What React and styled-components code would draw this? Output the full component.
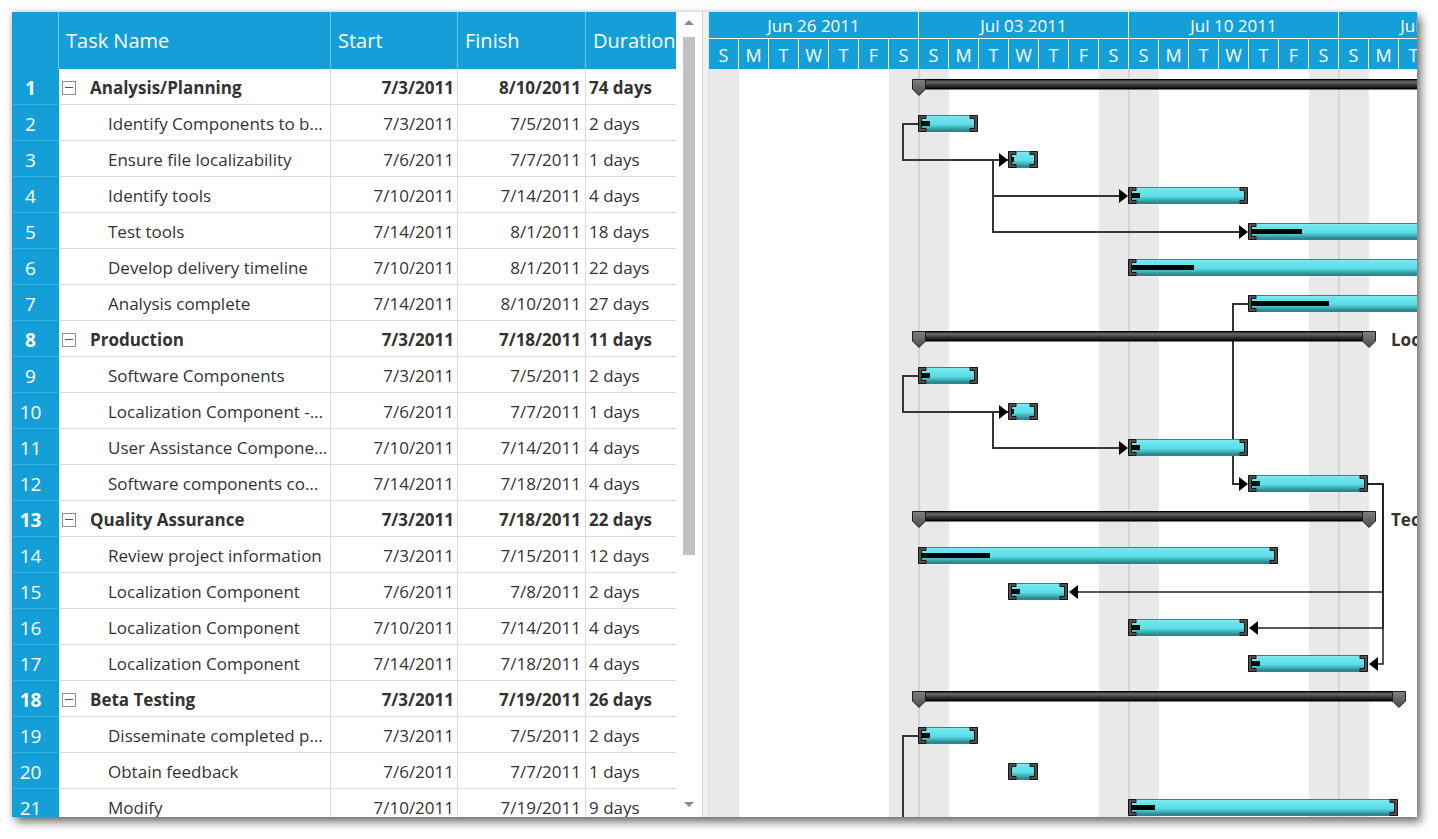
import React from "react";
import styled, { createGlobalStyle } from "styled-components";

const BLUE = "#149fd9";
const FONT = `"Open Sans", "Noto Sans", "DejaVu Sans", sans-serif`;

const GlobalStyle = createGlobalStyle`
  html, body { margin: 0; padding: 0; background: #fff; }
  body { font-family: ${FONT}; }
`;

const Page = styled.div`
  height: 839px;
  padding: 12px 0 0 12px;
  box-sizing: border-box;
  overflow: hidden;
`;

const Window = styled.div`
  width: 1405px;
  height: 805px;
  display: flex;
  background: #fff;
  overflow: hidden;
  box-shadow: 4px 5px 9px rgba(0, 0, 0, 0.55), 0 0 5px rgba(0, 0, 0, 0.18);
`;

const GridPanel = styled.div`
  width: 664px;
  flex-shrink: 0;
  display: flex;
  flex-direction: column;
`;

const GridRow = styled.div`
  display: grid;
  grid-template-columns: 47px 272px 127px 128px 90px;
  height: ${(p) => p.$h}px;
  flex-shrink: 0;
`;

const HeadCell = styled.div`
  background: ${BLUE};
  color: #fff;
  font-size: 20px;
  display: flex;
  align-items: center;
  padding-left: 7px;
  border-right: 1px solid #74c3ea;
  box-sizing: border-box;
  white-space: nowrap;
  overflow: hidden;
  &:last-child {
    border-right: none;
  }
`;

const NumCell = styled.div`
  background: ${BLUE};
  color: #fff;
  font-size: 19px;
  font-weight: ${(p) => (p.$bold ? 700 : 400)};
  display: flex;
  align-items: center;
  justify-content: center;
  padding: 2px 10px 0 0;
  border-bottom: 1px solid rgba(255, 255, 255, 0.16);
  box-sizing: border-box;
`;

const Cell = styled.div`
  font-size: 17px;
  color: #333;
  font-weight: ${(p) => (p.$bold ? 700 : 400)};
  display: flex;
  align-items: center;
  justify-content: ${(p) => (p.$right ? "flex-end" : "flex-start")};
  padding: ${(p) => p.$pad};
  padding-top: 2px;
  border-right: 1px solid #dadada;
  border-bottom: 1px solid #dadada;
  box-sizing: border-box;
  white-space: nowrap;
  overflow: hidden;
  &:last-child {
    border-right: none;
  }
`;

const Toggle = styled.span`
  width: 14px;
  height: 14px;
  border: 1px solid #8e8e8e;
  box-sizing: border-box;
  margin-right: 14px;
  flex-shrink: 0;
  display: flex;
  align-items: center;
  justify-content: center;
  &::after {
    content: "";
    width: 8px;
    height: 1px;
    background: #555;
  }
`;

const Scrollbar = styled.div`
  width: 26px;
  flex-shrink: 0;
  background: #fff;
  display: flex;
  flex-direction: column;
  align-items: center;
`;

const Arrow = styled.div`
  width: 0;
  height: 0;
  border-left: 5px solid transparent;
  border-right: 5px solid transparent;
  ${(p) =>
    p.$down
      ? `border-top: 5px solid #8a8a8a; margin-bottom: 10px;`
      : `border-bottom: 5px solid #8a8a8a; margin-top: 8px;`}
`;

const Thumb = styled.div`
  width: 12px;
  height: 518px;
  margin-top: 12px;
  background: #c1c1c1;
`;

const Spacer = styled.div`
  flex: 1;
`;

const Splitter = styled.div`
  width: 7px;
  flex-shrink: 0;
  background: #f1f1f1;
  border-left: 1px solid #d2d2d2;
  border-right: 1px solid #dedede;
  box-sizing: border-box;
`;

const ChartPanel = styled.div`
  flex: 1;
  min-width: 0;
  display: flex;
  flex-direction: column;
  overflow: hidden;
`;

const Strip = styled.div`
  display: flex;
  height: ${(p) => p.$h}px;
  flex-shrink: 0;
  box-sizing: border-box;
  border-bottom: ${(p) => (p.$line ? "1px solid #fff" : "none")};
`;

const WeekCell = styled.div`
  width: 210px;
  flex-shrink: 0;
  background: ${BLUE};
  color: #fff;
  font-size: 17px;
  border-right: 1px solid #fff;
  box-sizing: border-box;
  display: flex;
  align-items: center;
  justify-content: center;
  white-space: nowrap;
`;

const DayCell = styled.div`
  width: 30px;
  flex-shrink: 0;
  background: ${BLUE};
  color: #fff;
  font-size: 18px;
  padding-top: 1px;
  border-right: 1px solid #fff;
  box-sizing: border-box;
  display: flex;
  align-items: center;
  justify-content: center;
`;

const ChartBody = styled.div`
  position: relative;
  flex: 1;
  display: flex;
`;

const DayColumn = styled.div`
  width: 30px;
  flex-shrink: 0;
  background: ${(p) => (p.$weekend ? "#e9e9e9" : "#fff")};
  box-shadow: ${(p) =>
    p.$edge === "end"
      ? "inset -1px 0 #d4d4d4"
      : p.$edge === "start"
      ? "inset 1px 0 #d4d4d4"
      : "none"};
`;

const Overlay = styled.svg`
  position: absolute;
  left: 0;
  top: 0;
  overflow: hidden;
`;

const tasks = [
  { name: "Analysis/Planning", s: "7/3/2011", f: "8/10/2011", dur: "74 days", sum: true, d: 7, len: 38 },
  { name: "Identify Components to b…", s: "7/3/2011", f: "7/5/2011", dur: "2 days", d: 7, len: 2, p: 8 },
  { name: "Ensure file localizability", s: "7/6/2011", f: "7/7/2011", dur: "1 days", d: 10, len: 1, p: 2 },
  { name: "Identify tools", s: "7/10/2011", f: "7/14/2011", dur: "4 days", d: 14, len: 4, p: 8 },
  { name: "Test tools", s: "7/14/2011", f: "8/1/2011", dur: "18 days", d: 18, len: 18, p: 50 },
  { name: "Develop delivery timeline", s: "7/10/2011", f: "8/1/2011", dur: "22 days", d: 14, len: 22, p: 62 },
  { name: "Analysis complete", s: "7/14/2011", f: "8/10/2011", dur: "27 days", d: 18, len: 27, p: 77 },
  { name: "Production", s: "7/3/2011", f: "7/18/2011", dur: "11 days", sum: true, d: 7, len: 15, label: "Localization" },
  { name: "Software Components", s: "7/3/2011", f: "7/5/2011", dur: "2 days", d: 7, len: 2, p: 8 },
  { name: "Localization Component -…", s: "7/6/2011", f: "7/7/2011", dur: "1 days", d: 10, len: 1, p: 2 },
  { name: "User Assistance Compone…", s: "7/10/2011", f: "7/14/2011", dur: "4 days", d: 14, len: 4, p: 8 },
  { name: "Software components co…", s: "7/14/2011", f: "7/18/2011", dur: "4 days", d: 18, len: 4, p: 8 },
  { name: "Quality Assurance", s: "7/3/2011", f: "7/18/2011", dur: "22 days", sum: true, d: 7, len: 15, label: "Technical Review" },
  { name: "Review project information", s: "7/3/2011", f: "7/15/2011", dur: "12 days", d: 7, len: 12, p: 68 },
  { name: "Localization Component", s: "7/6/2011", f: "7/8/2011", dur: "2 days", d: 10, len: 2, p: 8 },
  { name: "Localization Component", s: "7/10/2011", f: "7/14/2011", dur: "4 days", d: 14, len: 4, p: 8 },
  { name: "Localization Component", s: "7/14/2011", f: "7/18/2011", dur: "4 days", d: 18, len: 4, p: 8 },
  { name: "Beta Testing", s: "7/3/2011", f: "7/19/2011", dur: "26 days", sum: true, d: 7, len: 16, label: "Deliverables" },
  { name: "Disseminate completed p…", s: "7/3/2011", f: "7/5/2011", dur: "2 days", d: 7, len: 2, p: 8 },
  { name: "Obtain feedback", s: "7/6/2011", f: "7/7/2011", dur: "1 days", d: 10, len: 1, p: 0 },
  { name: "Modify", s: "7/10/2011", f: "7/19/2011", dur: "9 days", d: 14, len: 9, p: 23 },
];

// links: [from row, to row], rows 1-based
const startLinks = [[2, 3], [3, 4], [3, 5], [7, 12], [9, 10], [10, 11]];
const endLinks = [[12, 15], [12, 16], [12, 17]];

const weeks = ["Jun 26 2011", "Jul 03 2011", "Jul 10 2011", "Jul 17 2011"];
const dayNames = ["S", "M", "T", "W", "T", "F", "S"];

const X = (d) => 30 * d - 1;
const top = (n) => 36 * (n - 1);
const mid = (n) => top(n) + 19;

const TaskBar = ({ n, t }) => {
  const x = X(t.d);
  const w = 30 * t.len;
  const y = top(n) + 10;
  const h = 17;
  const r = x + w;
  return (
    <g>
      <rect x={x + 1} y={y + 0.5} width={w - 2} height={h - 1} fill="url(#cyan)" stroke="#477c80" strokeWidth="1" />
      {t.p > 0 && <rect x={x + 4} y={y + 6} width={t.p} height={5} fill="#000" />}
      <path
        d={`M${x + 0.5} ${y + 0.5} H${x + 8} V${y + 3.5} H${x + 3.5} V${y + h - 3.5} H${x + 8} V${y + h - 0.5} H${x + 0.5} Z`}
        fill="#505050"
        stroke="#151515"
        strokeWidth="1"
      />
      <path
        d={`M${r - 0.5} ${y + 0.5} H${r - 8} V${y + 3.5} H${r - 3.5} V${y + h - 3.5} H${r - 8} V${y + h - 0.5} H${r - 0.5} Z`}
        fill="#505050"
        stroke="#151515"
        strokeWidth="1"
      />
    </g>
  );
};

const Marker = ({ cx, y }) => (
  <path
    d={`M${cx - 6.5} ${y + 0.5} H${cx + 6.5} V${y + 10} L${cx} ${y + 16.5} L${cx - 6.5} ${y + 10} Z`}
    fill="url(#marker)"
    stroke="#1e1e1e"
    strokeWidth="1"
  />
);

const SummaryBar = ({ n, t }) => {
  const x = X(t.d) + 1;
  const r = X(t.d + t.len) + 1;
  const y = top(n) + 10;
  return (
    <g>
      <rect x={x} y={y + 0.5} width={r - x} height={9.5} fill="url(#summary)" stroke="#000" strokeWidth="1" />
      <Marker cx={x} y={y} />
      <Marker cx={r} y={y} />
      {t.label && (
        <text x={r + 22} y={mid(n) + 6} fontSize="17" fontWeight="700" fill="#333" fontFamily={FONT}>
          {t.label}
        </text>
      )}
    </g>
  );
};

const ArrowHead = ({ x, y, left }) =>
  left ? (
    <path d={`M${x} ${y} L${x + 9} ${y - 7} V${y + 7} Z`} fill="#000" />
  ) : (
    <path d={`M${x} ${y} L${x - 9} ${y - 7} V${y + 7} Z`} fill="#000" />
  );

const Chart = () => {
  const days = Array.from({ length: 28 }, (_, i) => i);
  return (
    <ChartPanel>
      <Strip $h={27} $line>
        {weeks.map((w) => (
          <WeekCell key={w}>{w}</WeekCell>
        ))}
      </Strip>
      <Strip $h={30}>
        {days.map((i) => (
          <DayCell key={i}>{dayNames[i % 7]}</DayCell>
        ))}
      </Strip>
      <ChartBody>
        {days.map((i) => (
          <DayColumn
            key={i}
            $weekend={i % 7 === 0 || i % 7 === 6}
            $edge={i % 7 === 6 ? "end" : i % 7 === 0 && i > 0 ? "start" : ""}
          />
        ))}
        <Overlay width="708" height="760">
          <defs>
            <linearGradient id="cyan" x1="0" y1="0" x2="0" y2="1">
              <stop offset="0" stopColor="#8aeef3" />
              <stop offset="0.2" stopColor="#69e5ed" />
              <stop offset="0.55" stopColor="#5fdde6" />
              <stop offset="0.78" stopColor="#3caeb6" />
              <stop offset="1" stopColor="#22767c" />
            </linearGradient>
            <linearGradient id="summary" x1="0" y1="0" x2="0" y2="1">
              <stop offset="0" stopColor="#111" />
              <stop offset="0.25" stopColor="#6c6c6c" />
              <stop offset="0.5" stopColor="#444" />
              <stop offset="0.8" stopColor="#1c1c1c" />
              <stop offset="1" stopColor="#000" />
            </linearGradient>
            <linearGradient id="marker" x1="0" y1="0" x2="0" y2="1">
              <stop offset="0" stopColor="#808080" />
              <stop offset="1" stopColor="#4c4c4c" />
            </linearGradient>
          </defs>

          <g stroke="#353535" strokeWidth="2" fill="none">
            {startLinks.map(([a, b]) => {
              const ax = X(tasks[a - 1].d);
              const bx = X(tasks[b - 1].d);
              return <path key={`s${a}-${b}`} d={`M${ax} ${mid(a)} H${ax - 15} V${mid(b)} H${bx - 9}`} />;
            })}
            <path d={`M${X(7)} ${mid(19)} H${X(7) - 15} V770`} />
          </g>
          <g stroke="#1f1f1f" strokeWidth="1.5" fill="none">
            {endLinks.map(([a, b]) => {
              const ax = X(tasks[a - 1].d + tasks[a - 1].len);
              const bx = X(tasks[b - 1].d + tasks[b - 1].len);
              return <path key={`e${a}-${b}`} d={`M${ax} ${mid(a)} H${ax + 15} V${mid(b)} H${bx + 9}`} />;
            })}
          </g>

          {tasks.map((t, i) =>
            t.sum ? <SummaryBar key={i} n={i + 1} t={t} /> : <TaskBar key={i} n={i + 1} t={t} />
          )}

          {startLinks.map(([a, b]) => (
            <ArrowHead key={`as${a}-${b}`} x={X(tasks[b - 1].d)} y={mid(b)} />
          ))}
          {endLinks.map(([a, b]) => (
            <ArrowHead key={`ae${a}-${b}`} x={X(tasks[b - 1].d + tasks[b - 1].len) + 1} y={mid(b)} left />
          ))}
        </Overlay>
      </ChartBody>
    </ChartPanel>
  );
};

const TaskGrid = () => (
  <GridPanel>
    <GridRow $h={57}>
      <HeadCell />
      <HeadCell>Task Name</HeadCell>
      <HeadCell>Start</HeadCell>
      <HeadCell>Finish</HeadCell>
      <HeadCell>Duration</HeadCell>
    </GridRow>
    {tasks.map((t, i) => (
      <GridRow $h={36} key={i}>
        <NumCell $bold={t.sum}>{i + 1}</NumCell>
        <Cell $bold={t.sum} $pad={t.sum ? "0 0 0 3px" : "0 0 0 49px"}>
          {t.sum && <Toggle />}
          {t.name}
        </Cell>
        <Cell $bold={t.sum} $right $pad="0 3px 0 0">
          {t.s}
        </Cell>
        <Cell $bold={t.sum} $right $pad="0 4px 0 0">
          {t.f}
        </Cell>
        <Cell $bold={t.sum} $pad="0 0 0 3px">
          {t.dur}
        </Cell>
      </GridRow>
    ))}
  </GridPanel>
);

export default function App() {
  return (
    <Page>
      <GlobalStyle />
      <Window>
        <TaskGrid />
        <Scrollbar>
          <Arrow />
          <Thumb />
          <Spacer />
          <Arrow $down />
        </Scrollbar>
        <Splitter />
        <Chart />
      </Window>
    </Page>
  );
}
